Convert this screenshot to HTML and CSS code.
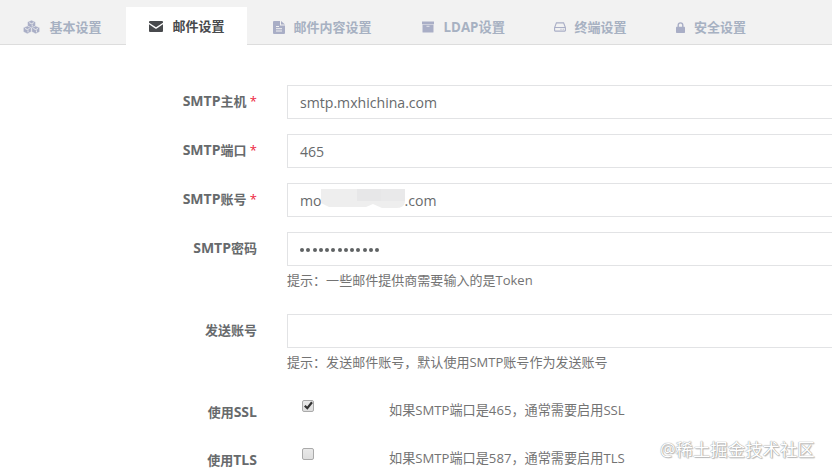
FILE: index.html
```html
<!DOCTYPE html>
<html lang="zh-CN">
<head>
<meta charset="utf-8">
<title>邮件设置</title>
<link rel="stylesheet" href="styles.css">
</head>
<body>
<nav class="tabs">
  <a class="tab tab-basic"><span class="icon"><svg width="17" height="14" viewBox="0 0 17 14"><g fill="currentColor" stroke="#f2f2f2" stroke-width=".4"><path d="M8.500 .2l3.900 1.800v4l-3.900 1.900-3.900-1.900v-4z"/><path d="M4.300 6l3.900 1.800v4l-3.900 1.900-3.900-1.900v-4z"/><path d="M12.700 6l3.900 1.800v4l-3.900 1.900-3.900-1.900v-4z"/></g><path d="M6.200 2.700l2.300 1 2.300-1M9.200 4.500v2M2 8.500l2.300 1 2.300-1M5 10.300v2M10.400 8.500l2.300 1 2.300-1M13.400 10.300v2" fill="none" stroke="#f2f2f2" stroke-width=".9"/></svg></span>基本设置</a>
  <a class="tab tab-mail active"><span class="icon"><svg width="14" height="11" viewBox="0 0 14 11"><path fill="currentColor" d="M1 0h12q1 0 1 1v.7L7 6.200 0 1.700V1q0-1 1-1zM0 3.200l6.200 4.200q.8.500 1.600 0L14 3.200V10q0 1-1 1H1q-1 0-1-1z"/></svg></span>邮件设置</a>
  <a class="tab tab-content"><span class="icon"><svg width="12" height="13" viewBox="0 0 12 13"><path fill="currentColor" d="M1 0h6v4.500h5V12q0 1-1 1H1q-1 0-1-1V1q0-1 1-1zM8 0l4 3.600H8z"/><path d="M3 5.500h3M3 7.700h6M3 10h6" stroke="#f2f2f2" stroke-width="1"/></svg></span>邮件内容设置</a>
  <a class="tab tab-ldap"><span class="icon"><svg width="12" height="12" viewBox="0 0 12 12"><path fill="currentColor" d="M0 .5h12v2.700H0zM.5 3.700h11v7.300q0 .5-.5.500H1q-.5 0-.5-.5z"/><path d="M4.500 5.300h3" stroke="#f2f2f2" stroke-width=".8"/></svg></span>LDAP设置</a>
  <a class="tab tab-device"><span class="icon"><svg width="12" height="10" viewBox="0 0 12 10"><path d="M.6 5.600L2.400.9h7.200l1.800 4.700v2.900q0 .6-.6.600H1.200q-.6 0-.6-.6zM.8 5.500h10.400M6.500 7.300h1M8.700 7.300h1" fill="none" stroke="currentColor" stroke-width="1.100"/></svg></span>终端设置</a>
  <a class="tab tab-security"><span class="icon"><svg width="9" height="11" viewBox="0 0 9 11"><path d="M2.200 5V3.200a2.300 2.300 0 0 1 4.600 0V5" fill="none" stroke="currentColor" stroke-width="1.400"/><rect y="4.700" width="9" height="6.300" rx=".7" fill="currentColor"/></svg></span>安全设置</a>
</nav>
<form class="form">
  <div class="row"><label class="label"><span class="latin">SMTP</span>主机 <span class="required">*</span></label><div class="field"><div class="input">smtp.mxhichina.com</div></div></div>
  <div class="row"><label class="label"><span class="latin">SMTP</span>端口 <span class="required">*</span></label><div class="field"><div class="input">465</div></div></div>
  <div class="row"><label class="label"><span class="latin">SMTP</span>账号 <span class="required">*</span></label><div class="field"><div class="input">mo<svg class="mask" width="86" height="22" viewBox="0 0 86 22"><path d="M1 1h84v13q-1 6-9 6H62l-9-4-7 3H9L1 15z" fill="#eee"/><path d="M37 1h24v12H37z" fill="#e7e7e8"/><path d="M61 1h24v12H61z" fill="#e9e9ea"/></svg>.com</div></div></div>
  <div class="row"><label class="label"><span class="latin">SMTP</span>密码</label><div class="field"><div class="input password"><i></i><i></i><i></i><i></i><i></i><i></i><i></i><i></i><i></i><i></i><i></i><i></i><i></i></div><p class="hint">提示：一些邮件提供商需要输入的是Token</p></div></div>
  <div class="row"><label class="label">发送账号</label><div class="field"><div class="input"></div><p class="hint">提示：发送邮件账号，默认使用SMTP账号作为发送账号</p></div></div>
  <div class="row check-row"><label class="label">使用<span class="latin">SSL</span></label><div class="field check-field"><span class="checkbox"><svg width="11" height="11" viewBox="0 0 11 11"><path d="M1.800 5.700l2.500 2.500L9 2.200" fill="none" stroke="#333" stroke-width="2.200"/></svg></span><span class="check-note">如果SMTP端口是465，通常需要启用SSL</span></div></div>
  <div class="row check-row"><label class="label">使用<span class="latin">TLS</span></label><div class="field check-field"><span class="checkbox"></span><span class="check-note">如果SMTP端口是587，通常需要启用TLS</span></div></div>
</form>
<div class="watermark">@稀土掘金技术社区</div>
</body>
</html>
```
FILE: styles.css
```css
* { box-sizing: border-box; }
body {
  margin: 0;
  height: 475px;
  overflow: hidden;
  background: #fff;
  color: #676a6c;
  font: 13px/20px "Open Sans", "Noto Sans CJK SC", sans-serif;
}
.tabs {
  display: flex;
  gap: 2px;
  height: 45px;
  padding-top: 7px;
  background: #f2f2f2;
  border-bottom: 1px solid #ddd;
}
.tab {
  display: flex;
  flex: none;
  align-items: center;
  height: 38px;
  padding: 2px 22px 0 24px;
  color: #a7b1c2;
  font-weight: 600;
  white-space: nowrap;
}
.tab .icon { display: flex; flex: none; color: #a9aec6; }
.tab-basic { padding-left: 23px; }
.tab-basic .icon { width: 26.500px; }
.tab-mail { padding-left: 23.500px; }
.tab-mail .icon { width: 23.500px; }
.tab-content .icon { width: 21px; }
.tab-ldap { padding-left: 26px; font-weight: 700; font-size: 13.300px; }
.tab-ldap .icon { width: 22px; }
.tab-device { padding-left: 25px; }
.tab-device .icon { width: 20.500px; }
.tab-security { padding-left: 25px; }
.tab-security .icon { width: 18.500px; }
.tab.active { background: #fff; padding-top: 0; color: #484a4d; }
.tab.active .icon { color: #484a4d; }
.form { padding-top: 40px; }
.row { display: flex; margin-bottom: 15px; }
.label {
  flex: none;
  width: 257px;
  margin-right: 30px;
  padding-top: 6px;
  text-align: right;
  font-weight: 700;
}
.latin { font-size: 14px; line-height: 18px; }
.required { color: #ed1c3c; font-weight: 400; }
.field { flex: 1; min-width: 0; }
.input {
  display: flex;
  align-items: center;
  height: 34px;
  padding: 1px 12px 0;
  border: 1px solid #e2e3e5;
  border-right: 0;
  font-size: 14.100px;
}
.mask { flex: none; margin: -4px -1px 0 -2px; }
.password { gap: 2.250px; }
.password i { width: 4px; height: 4px; border-radius: 50%; background: #5f6264; }
.hint { margin: 4px 0 9px; color: #737373; font-size: 13.040px; }
.check-row { height: 33px; }
.check-field { display: flex; padding-left: 15px; }
.checkbox {
  width: 12px;
  height: 12px;
  margin-top: 4px;
  border: 1px solid #aaa;
  border-radius: 2px;
  background: linear-gradient(#e9e9e9, #dedede);
}
.checkbox svg { display: block; margin: -1px 0 0; }
.check-note { margin: 4px 0 0 75px; color: #737373; font-size: 13.150px; }
.watermark {
  position: absolute;
  left: 660px;
  top: 436px;
  color: #fff;
  font-size: 17.400px;
  line-height: 26px;
  white-space: nowrap;
  text-shadow: 0 0 1px #999, 0 0 1px #aaa, 1px 1px 1px #bbb;
}
```
